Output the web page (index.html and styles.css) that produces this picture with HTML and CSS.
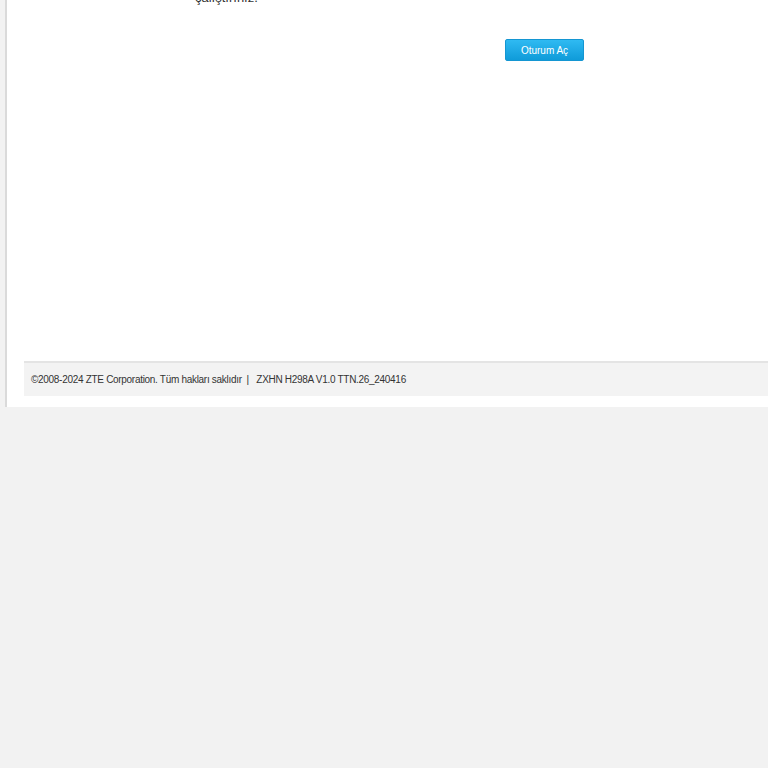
FILE: index.html
```html
<!DOCTYPE html>
<html lang="tr">
<head>
<meta charset="utf-8">
<title>ZTE</title>
<link rel="stylesheet" href="styles.css">
</head>
<body>
<div class="page">
  <div class="content">
    <p class="note">çalıştırınız.</p>
    <div class="actions">
      <button class="btn" type="button">Oturum Aç</button>
    </div>
  </div>
  <div class="footer">
    <span>©2008-2024 ZTE Corporation. Tüm hakları saklıdır&nbsp;&nbsp;|&nbsp;&nbsp;&nbsp;ZXHN H298A V1.0 TTN.26_240416</span>
  </div>
</div>
</body>
</html>
```
FILE: styles.css
```css
html, body {
  margin: 0;
  padding: 0;
  background: #f2f2f2;
  font-family: "Liberation Sans", Arial, sans-serif;
}
.page {
  margin-left: 5px;
  border-left: 2px solid #dadada;
  background: #fff;
  height: 407px;
  display: flex;
  flex-direction: column;
  overflow: hidden;
}
.content {
  height: 361px;
  display: flex;
  flex-direction: column;
}
.note {
  margin: -9px 0 0 0;
  padding-left: 188px;
  font-size: 13px;
  line-height: 14px;
  color: #333;
}
.actions {
  margin-top: 34px;
  padding-left: 498px;
}
.btn {
  width: 79px;
  height: 22px;
  border: 1px solid #1496d2;
  border-radius: 2px;
  background: linear-gradient(#2fbaf2, #0f9bd9);
  color: #fff;
  font-family: "Liberation Sans", Arial, sans-serif;
  font-size: 10px;
  padding: 0;
  cursor: pointer;
}
.footer {
  margin-left: 17px;
  height: 32px;
  border-top: 2px solid #e4e4e4;
  background: #f3f3f3;
  display: flex;
  align-items: center;
  padding-left: 7px;
  padding-bottom: 1px;
  font-size: 10px;
  letter-spacing: -0.3px;
  color: #333;
}
```
